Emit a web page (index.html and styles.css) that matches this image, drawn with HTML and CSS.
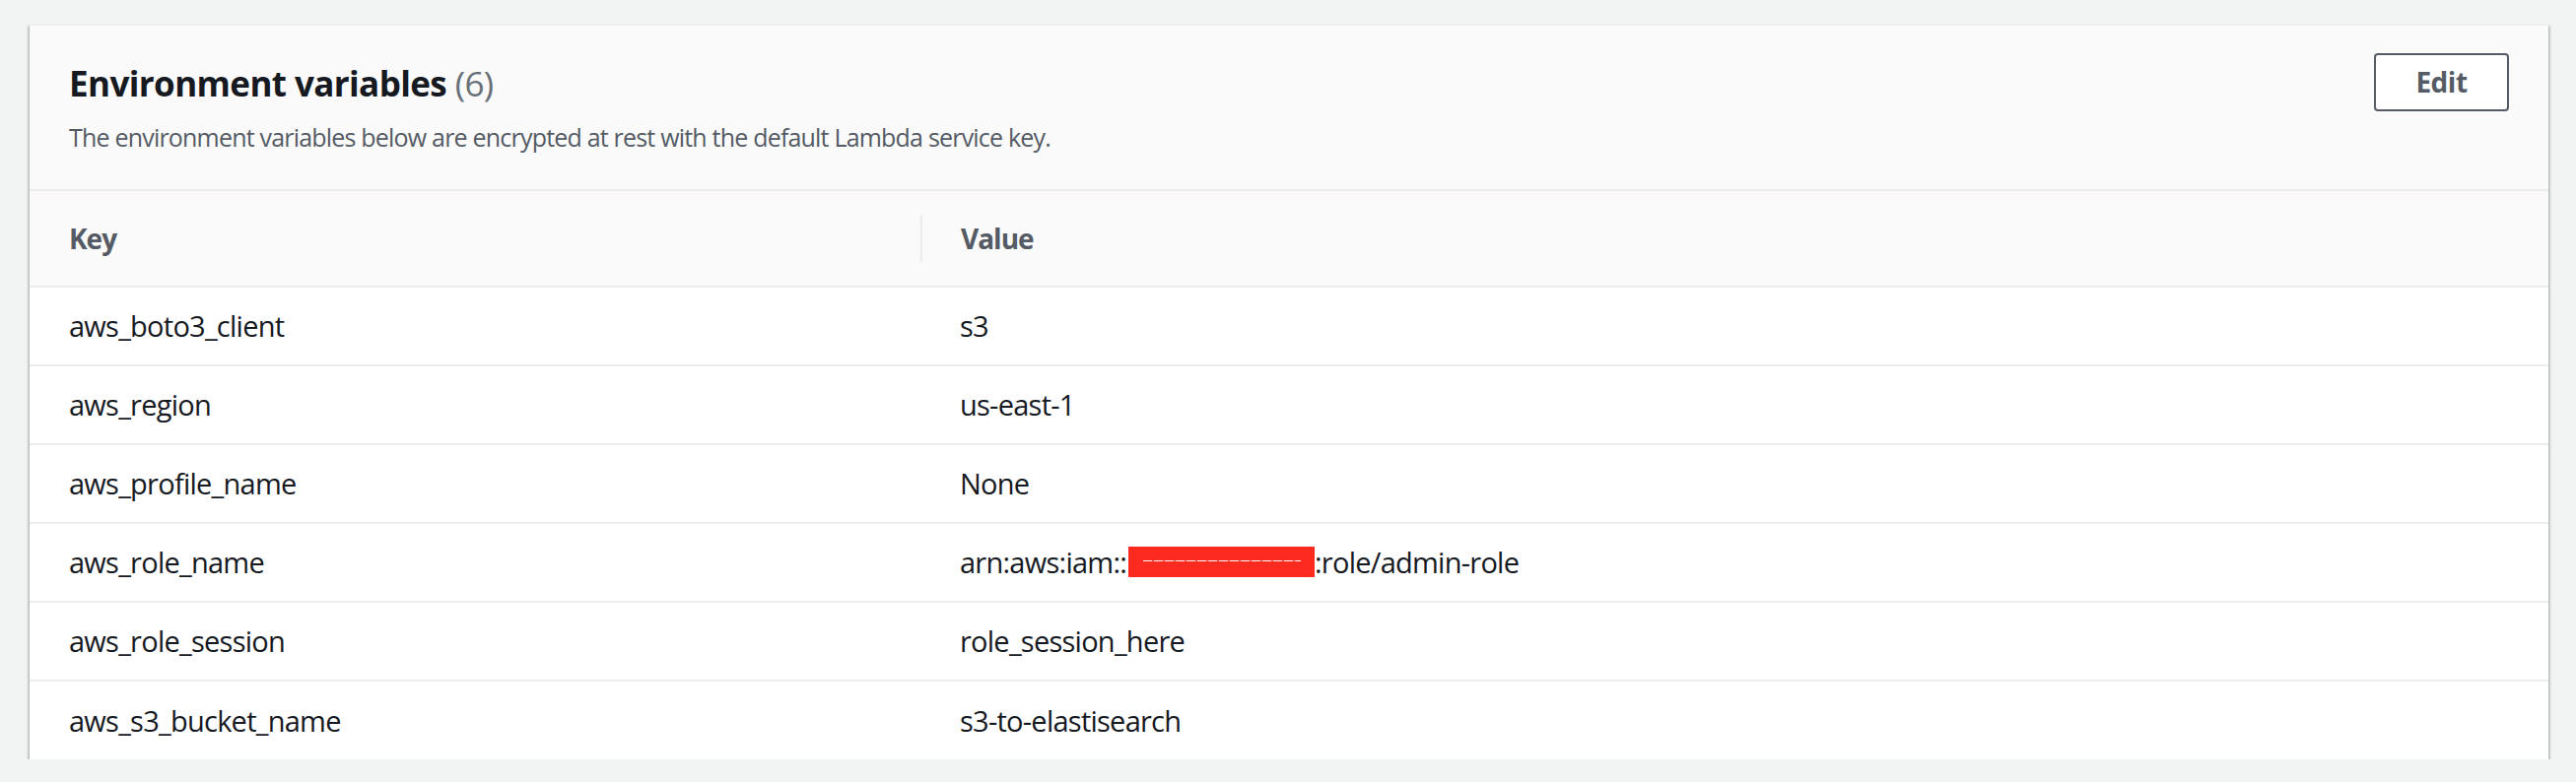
FILE: index.html
```html
<!DOCTYPE html>
<html lang="en">
<head>
<meta charset="utf-8">
<title>Environment variables</title>
<link rel="stylesheet" href="styles.css">
</head>
<body>
<div class="page">
  <section class="card">
    <header class="card-header">
      <div class="heading">
        <h2 class="title">Environment variables <span class="count">(6)</span></h2>
        <p class="desc">The environment variables below are encrypted at rest with the default Lambda service key.</p>
      </div>
      <button class="btn" type="button">Edit</button>
    </header>
    <div class="table">
      <div class="row head">
        <div class="hcell">Key</div>
        <div class="hcell sep">Value</div>
      </div>
      <div class="row">
        <div class="cell">aws_boto3_client</div>
        <div class="cell">s3</div>
      </div>
      <div class="row">
        <div class="cell">aws_region</div>
        <div class="cell">us-east-1</div>
      </div>
      <div class="row">
        <div class="cell">aws_profile_name</div>
        <div class="cell">None</div>
      </div>
      <div class="row">
        <div class="cell">aws_role_name</div>
        <div class="cell">arn:aws:iam::1<span class="redact"><span class="redact-line"></span></span>:role/admin-role</div>
      </div>
      <div class="row">
        <div class="cell">aws_role_session</div>
        <div class="cell">role_session_here</div>
      </div>
      <div class="row last">
        <div class="cell">aws_s3_bucket_name</div>
        <div class="cell">s3-to-elastisearch</div>
      </div>
    </div>
  </section>
</div>
</body>
</html>
```

FILE: styles.css
```css
* {
  box-sizing: border-box;
}

html, body {
  margin: 0;
  padding: 0;
  background: #f2f3f3;
  font-family: "Open Sans", "Noto Sans", sans-serif;
}

.page {
  padding: 25px 28px 0 30px;
}

.card {
  background: #ffffff;
  border-top: 1px solid #eaeded;
  box-shadow: 0 2px 2px 0 rgba(0, 28, 36, 0.35),
              2px 1px 2px 0 rgba(0, 28, 36, 0.15),
              -2px 1px 2px 0 rgba(0, 28, 36, 0.15);
}

.card-header {
  display: flex;
  align-items: flex-start;
  justify-content: space-between;
  background: #fafafa;
  padding: 28px 40px 35px 40px;
  border-bottom: 2px solid #eaeded;
}

.heading {
  margin-top: 7px;
}

.title {
  margin: 0;
  font-size: 35px;
  line-height: 48px;
  font-weight: 700;
  letter-spacing: -0.6px;
  color: #16191f;
}

.count {
  font-weight: 400;
  color: #687078;
}

.desc {
  margin: 12px 0 0 0;
  font-size: 25px;
  line-height: 36px;
  letter-spacing: -0.8px;
  color: #545b64;
}

.btn {
  width: 137px;
  height: 59px;
  padding: 0;
  border: 2px solid #545b64;
  border-radius: 4px;
  background: #ffffff;
  color: #545b64;
  font-family: "Open Sans", "Noto Sans", sans-serif;
  font-size: 28px;
  font-weight: 700;
  letter-spacing: -0.5px;
  line-height: 55px;
  flex: none;
}

.table {
  display: flex;
  flex-direction: column;
}

.row {
  display: grid;
  grid-template-columns: 904px 1fr;
  align-items: center;
  height: 80px;
  border-bottom: 2px solid #eaeded;
  background: #ffffff;
}

.row.last {
  border-bottom: none;
  height: 79px;
}

.row.head {
  height: 98px;
  background: #fafafa;
}

.hcell {
  height: 48px;
  line-height: 48px;
  padding-left: 40px;
  font-size: 28px;
  font-weight: 700;
  letter-spacing: -1px;
  color: #545b64;
}

.hcell.sep {
  border-left: 2px solid #eaeded;
  padding-left: 39px;
}

.cell {
  padding-left: 40px;
  font-size: 29px;
  line-height: 40px;
  letter-spacing: -0.75px;
  color: #16191f;
  white-space: nowrap;
}

.redact {
  display: inline-block;
  width: 189px;
  height: 31px;
  margin-left: -14px;
  vertical-align: -4px;
  background: #fc2a1f;
  padding: 14px 14px 0 15px;
}

.redact-line {
  display: block;
  height: 1px;
  background: repeating-linear-gradient(90deg, #ffffff 0, #ffffff 9px, #fc6a60 9px, #fc6a60 11px);
}
```
